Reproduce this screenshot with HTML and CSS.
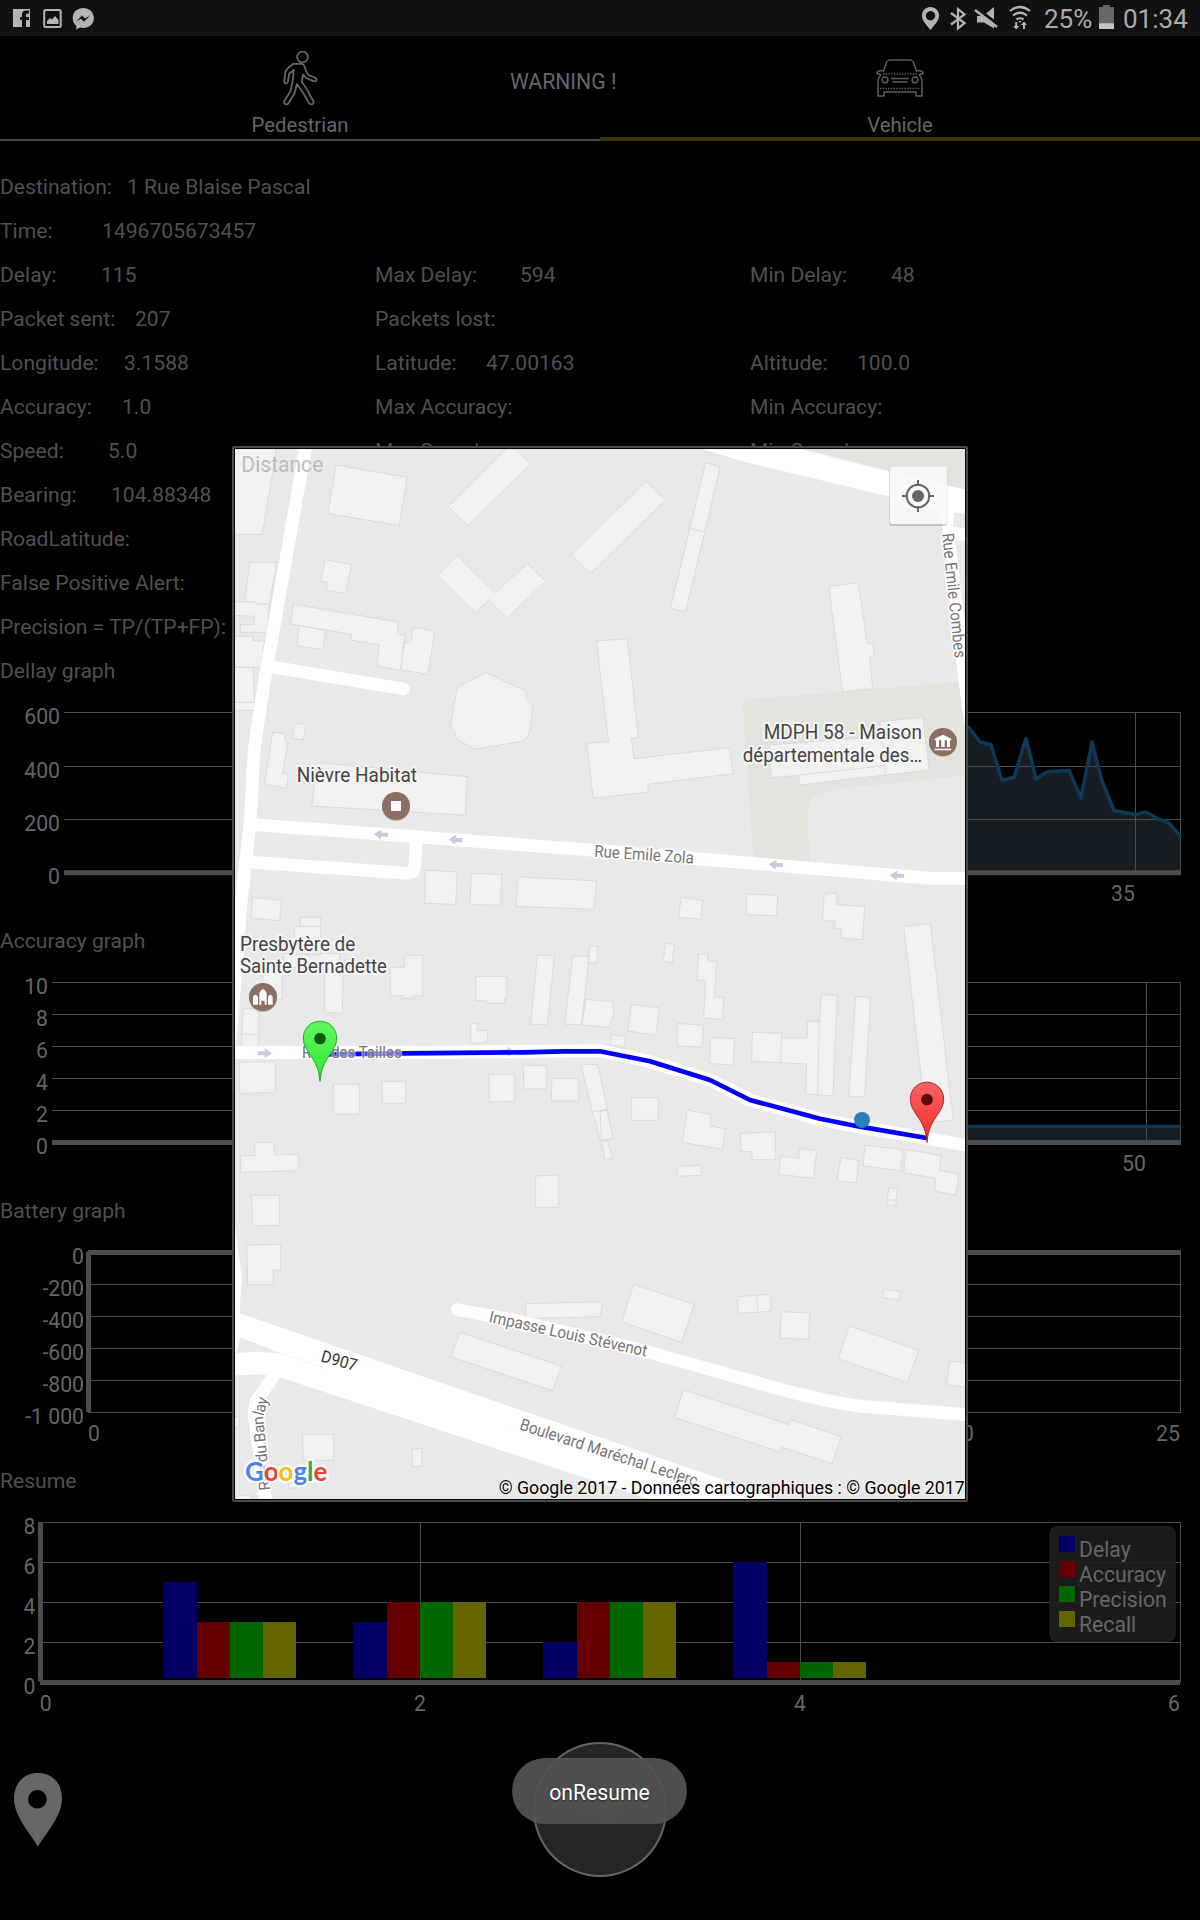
FILE: index.html
```html
<!DOCTYPE html>
<html lang="fr">
<head>
<meta charset="utf-8">
<title>Warning monitor</title>
<link rel="stylesheet" href="styles.css">
</head>
<body>
<div class="screen">
  <header class="status">
    <div class="status-left">
      <svg width="110" height="36" viewBox="0 0 110 36">
        <path fill="#b4b4b4" fill-rule="evenodd" d="M13 9h17v18h-4v-7h3v-3h-3v-2q0-1.500 1.500-1.500h1.500v-3h-3q-4 0-4 4v2.500h-2v3h2v7h-9z"/>
        <rect x="44.200" y="10" width="16.500" height="17" rx="1.500" fill="none" stroke="#b4b4b4" stroke-width="2"/>
        <path fill="#b4b4b4" d="M47 24v-3l3-3 2 1.500 3-3.500 3.500 4v4z"/>
        <path fill="#b4b4b4" d="M83.300 8c6 0 10.600 4.300 10.600 10s-4.600 10-10.600 10l-3.300-.5-3.700 2v-3.700C74 24 72.700 21.300 72.700 18c0-5.700 4.600-10 10.600-10z"/>
        <path fill="#111" d="M76 21.500l6-6 3 3 5-3-6 6.200-3-3z"/>
      </svg>
    </div>
    <div class="status-right">
      <svg width="120" height="36" viewBox="918 0 120 36">
        <path fill="#b4b4b4" fill-rule="evenodd" d="M930.500 7c5 0 8.600 3.700 8.600 8.500 0 5-4.600 9.500-8.600 14.500-4-5-8.600-9.500-8.600-14.500 0-4.800 3.600-8.500 8.600-8.500zm0 4a4.700 4.700 0 1 0 .01 0z"/>
        <path fill="none" stroke="#b4b4b4" stroke-width="2.200" d="M951 13l13.500 10-6.500 5.500v-19.500l6.500 5.500-13.500 10"/>
        <path fill="#b4b4b4" d="M977 16l6 0 11-9v21.500l-10-6h-7z"/>
        <path stroke="#111" stroke-width="3" d="M977 8.500l21 16"/>
        <path stroke="#b4b4b4" stroke-width="2.400" d="M975 10l22 17"/>
        <g fill="none" stroke="#b4b4b4" stroke-width="2.200"><path d="M1010 11q10-8 20 0"/><path d="M1013 15.500q7-5.500 14 0"/><path d="M1016.500 19.500q3.500-2.500 7 0"/></g>
        <path fill="#b4b4b4" d="M1015.200 22h2v4h2l-3 3.500-3-3.500h2zM1023 29v-4h-2l3-3.500 3 3.500h-2v4zM1018.500 21h3l-1.500 2z"/>
      </svg>
      <span class="pct">25%</span>
      <svg class="batt" width="15" height="36" viewBox="0 0 15 36"><path fill="#666" d="M0 7h4V5h7v2h4v22H0z"/><path fill="#c4c4c4" d="M0 23.300h15V29H0z"/></svg>
      <span class="clock">01:34</span>
    </div>
  </header>

  <nav class="tabs">
    <div class="tab">
      <svg width="48" height="70" viewBox="276 44 48 70" fill="none" stroke="#666" stroke-width="1.800" stroke-linejoin="round">
        <circle cx="302.500" cy="57" r="5.400"/>
        <path d="M297.500 63.800h4c2.500 0 3.500 3 4 5.500 .8 3 1.500 5 4 6.200l5.500 2.200c3 1.200 1.500 4.500-1.500 3.500l-7.500-3.200-3-3.500-1.200 7.500c3 4 6 8 7.500 12l4 7c1.500 3-2.500 4.500-4.500 2l-5.500-10-6.500-9c-1 4-1 7-3 10.500l-5.500 9c-2 2-5 0-4-2.500l6-9.500 2.500-11 1-10.500-4.500 3.500-1.500 8.500c-1 2.500-4 1.500-3.500-1l1.200-9.500c2-3.500 5.500-6 8-7.700z"/>
      </svg>
      <span>Pedestrian</span>
    </div>
    <div class="tab active">
      <svg width="60" height="70" viewBox="870 44 60 70" fill="none" stroke="#5c5c5c" stroke-width="1.500" stroke-linejoin="round">
        <path d="M883 72l4-10.500 2-1.500h22l2 1.500 4 10.500M883 71c-3-1-6 0-6 2.500l4 1.500M917 71c3-1 6 0 6 2.500l-4 1.500M881 74c-2 3-3 5-3 8v14h6v-4h32v4h6v-14c0-3-1-5-3-8"/>
        <circle cx="885" cy="80" r="2.900"/><circle cx="915" cy="80" r="2.900"/>
        <path d="M891 78.500h18M892.500 82h15"/>
        <path stroke-dasharray="1.500 1.200" d="M883 74h34M880 88.500h40"/>
      </svg>
      <span>Vehicle</span>
    </div>
    <span class="warning">WARNING !</span>
  </nav>

  <main>
    <section class="info">
      <div class="row"><div class="cell"><span class="l126">Destination:</span><span>1 Rue Blaise Pascal</span></div></div>
      <div class="row"><div class="cell"><span class="l101">Time:</span><span>1496705673457</span></div></div>
      <div class="row">
        <div class="cell"><span class="l100">Delay:</span><span>115</span></div>
        <div class="cell"><span class="l145">Max Delay:</span><span>594</span></div>
        <div class="cell"><span class="l140">Min Delay:</span><span>48</span></div>
      </div>
      <div class="row">
        <div class="cell"><span class="l134">Packet sent:</span><span>207</span></div>
        <div class="cell"><span>Packets lost:</span></div>
      </div>
      <div class="row">
        <div class="cell"><span class="l123">Longitude:</span><span>3.1588</span></div>
        <div class="cell"><span class="l110">Latitude:</span><span>47.00163</span></div>
        <div class="cell"><span class="l106">Altitude:</span><span>100.0</span></div>
      </div>
      <div class="row">
        <div class="cell"><span class="l121">Accuracy:</span><span>1.0</span></div>
        <div class="cell"><span>Max Accuracy:</span></div>
        <div class="cell"><span>Min Accuracy:</span></div>
      </div>
      <div class="row">
        <div class="cell"><span class="l108">Speed:</span><span>5.0</span></div>
        <div class="cell"><span>Max Speed:</span></div>
        <div class="cell"><span>Min Speed:</span></div>
      </div>
      <div class="row"><div class="cell"><span class="l110">Bearing:</span><span>104.88348</span></div></div>
      <div class="row"><div class="cell"><span>RoadLatitude:</span></div></div>
      <div class="row"><div class="cell"><span>False Positive Alert:</span></div></div>
      <div class="row"><div class="cell"><span>Precision = TP/(TP+FP):</span></div></div>
    </section>

    <h2>Dellay graph</h2>
    <svg class="chart" viewBox="0 693 1200 226">
      <path class="area" d="M960 720L970 729 980 742 991 744.500 1002 780 1014 777.500 1026 738.500 1036 779 1047 772 1069 770.500 1081 798 1092 742 1102 781 1114 810.500 1135 814.500 1146 812 1158 819 1169 823 1181 837V871H960z"/>
      <path class="grid" d="M64 712.500H1181M64 766.500H1181M64 819.500H1181M1135.500 712V871M1180.500 712V871"/>
      <path class="axis" d="M64 872.800H1181"/>
      <path class="line" d="M960 720L970 729 980 742 991 744.500 1002 780 1014 777.500 1026 738.500 1036 779 1047 772 1069 770.500 1081 798 1092 742 1102 781 1114 810.500 1135 814.500 1146 812 1158 819 1169 823 1181 837"/>
      <g class="ylab"><text x="60" y="724">600</text><text x="60" y="778">400</text><text x="60" y="831">200</text><text x="60" y="884">0</text></g>
      <g class="xlab"><text x="1123" y="901">35</text></g>
    </svg>

    <h2>Accuracy graph</h2>
    <svg class="chart" viewBox="0 963 1200 226">
      <path class="area" d="M900 1126.500H1181V1141H900z"/>
      <path class="grid" d="M52 982.500H1181M52 1014.500H1181M52 1046.500H1181M52 1078.500H1181M52 1110.500H1181M1146.500 982V1141M1180.500 982V1141"/>
      <path class="axis" d="M52 1142.500H1181"/>
      <path class="line" d="M900 1126.500H1181"/>
      <g class="ylab"><text x="48" y="994">10</text><text x="48" y="1026">8</text><text x="48" y="1058">6</text><text x="48" y="1090">4</text><text x="48" y="1122">2</text><text x="48" y="1154">0</text></g>
      <g class="xlab"><text x="1134" y="1171">50</text></g>
    </svg>

    <h2>Battery graph</h2>
    <svg class="chart" viewBox="0 1233 1200 226">
      <path class="grid" d="M91 1284.500H1181M91 1316.500H1181M91 1348.500H1181M91 1380.500H1181M88 1412.500H1181M1180.500 1252V1412"/>
      <path class="axis" d="M88 1252.500H1181M88.500 1251.500V1412"/>
      <g class="ylab"><text x="84" y="1264">0</text><text x="84" y="1296">-200</text><text x="84" y="1328">-400</text><text x="84" y="1360">-600</text><text x="84" y="1392">-800</text><text x="84" y="1424">-1 000</text></g>
      <g class="xlab"><text x="94" y="1440.500">0</text><text x="962" y="1440.500">20</text><text x="1168" y="1440.500">25</text></g>
    </svg>

    <h2>Resume</h2>
    <svg class="chart" viewBox="0 1503 1200 226">
      <path class="grid" d="M42 1522.500H1181M42 1562.500H1181M42 1602.500H1181M42 1642.500H1181M420.500 1522V1680M800.500 1522V1680M1180.500 1522V1682"/>
      <path class="axis" d="M40 1682.500H1180M40.400 1522V1681.500"/>
      <g fill="#006"><path d="M163 1582h34v96h-34zM353 1622h34v56h-34zM543 1642h34v36h-34zM733 1562h34v116h-34z"/></g>
      <g fill="#600"><path d="M197 1622h33v56h-33zM387 1602h33v76h-33zM577 1602h33v76h-33zM767 1662h33v16h-33z"/></g>
      <g fill="#060"><path d="M230 1622h33v56h-33zM420 1602h33v76h-33zM610 1602h33v76h-33zM800 1662h33v16h-33z"/></g>
      <g fill="#660"><path d="M263 1622h33v56h-33zM453 1602h33v76h-33zM643 1602h33v76h-33zM833 1662h33v16h-33z"/></g>
      <g class="ylab"><text x="35.500" y="1534">8</text><text x="35.500" y="1574">6</text><text x="35.500" y="1614">4</text><text x="35.500" y="1654">2</text><text x="35.500" y="1694">0</text></g>
      <g class="xlab"><text x="45.700" y="1711">0</text><text x="420" y="1711">2</text><text x="800" y="1711">4</text><text x="1174" y="1711">6</text></g>
      <rect x="1049" y="1526" width="127" height="116" rx="8" fill="#1e1e1e" fill-opacity=".9"/>
      <path fill="#006" d="M1059 1536h16v16h-16z"/><path fill="#600" d="M1059 1561h16v16h-16z"/><path fill="#060" d="M1059 1586h16v16h-16z"/><path fill="#660" d="M1059 1611h16v16h-16z"/>
      <g class="legend"><text x="1079" y="1557">Delay</text><text x="1079" y="1582">Accuracy</text><text x="1079" y="1607">Precision</text><text x="1079" y="1632">Recall</text></g>
    </svg>
  </main>

  <footer class="controls">
    <svg class="pin" width="48" height="74" viewBox="0 0 48 74"><path fill="#666" fill-rule="evenodd" d="M24 0C38 0 48 10 48 25.500 48 42 35 56 24 73.500 13 56 0 42 0 25.500 0 10 10 0 24 0zm-.6 17a9.300 9.300 0 1 0 .01 0z"/></svg>
    <div class="stop">Stop</div>
  </footer>

  <div class="dialog">
    <svg class="map" viewBox="235 449 730 1050">
      <defs>
        <path id="arrow" fill="#c8cae0" d="M0 0L22-15v9h21v12H22v9z"/>
        <linearGradient id="gg" x2="0" y2="1"><stop stop-color="#62f762"/><stop offset="1" stop-color="#2ee82e"/></linearGradient>
        <linearGradient id="rg" x2="0" y2="1"><stop stop-color="#fa6363"/><stop offset="1" stop-color="#ee2c2c"/></linearGradient>
        <path id="marker" d="M0 0C-5-75-50-85-50-131A50 50 0 0 1 50-131C50-85 5-75 0 0z"/>
      </defs>
      <path fill="#e9e9e9" d="M235 449h730v1050H235z"/>

      <!-- parks -->
      <g transform="translate(600 440) scale(.33333)" fill="#e2e4dd">
        <path d="M427 780L1078 726 1100 860V1007L700 1048 640 1072 621 1112 630 1265 460 1255z"/>
        <path d="M590 20H1100V150z"/>
      </g>

      <!-- buildings -->
      <g class="bld">
        <g transform="translate(230 440) scale(.33333)">
          <path d="M10 26H140L97 283H10zM318 75L532 112 508 257 293 220zM830 26H856L902 72 713 257 655 199zM682 346L796 459 892 370 946 424 832 535 776 481 736 518 623 406zM285 359L365 373 347 460 289 451 291 427 272 424zM60 367H140L118 493 80 492 79 487 44 485z"/>
          <path d="M10 485L80 487 80 493H118L113 577H31V554H72V529L10 526zM10 589H69V601L103 604 93 682H10zM10 682H69L74 787H10zM10 787H74V811H10z"/>
          <path d="M191 493L505 546 502 581 526 587 512 690 440 679 448 614 365 601V583L182 552zM207 557L287 571 278 629 200 617zM549 562L615 573 594 703 512 690 521 610 542 608z"/>
          <path d="M769 698L889 754 887 776Q912 793 908 810L898 877Q890 902 872 905L734 928 675 894V875L661 858 681 747Q683 742 720 722zM193 850L229 853 220 900 188 895zM128 877L166 881V906L173 909 158 1000 175 1005 169 1044 103 1034zM260 967L712 1010 706 1126 245 1098z"/>
          <path d="M1024 345L1248 124 1306 181 1082 400zM1099 603L1192 596 1226 892 1204 895 1212 956 1499 923 1510 1001 1254 1033V1057L1090 1075 1069 910 1136 905z"/>
        </g>
        <g transform="translate(600 440) scale(.33333)">
          <path d="M317 68L361 81 257 515 211 505zM270 266L315 275M686 439L775 428 802 610 820 612 823 652 809 654 818 746 728 756zM510 915L840 890V845L968 832 988 990 858 1005 598 1035 596 1006 513 1013zM846 892L857 1005M598 1005L853 977"/>
        </g>
        <g transform="translate(230 880) scale(.33333)">
          <path d="M67 52L155 61 149 122 63 114zM211 112H272V225H193V139H211zM211 139H272M160 220H329V262H340L337 400 284 398V262H157V358H98V275H160zM40 385H86V490L82 501 34 499zM34 463H82M524 226H578V348H551V355H517V347H481V262H524zM737 289H830V356H823V370H769V361H737zM585-30L682-24 677 73 584 70zM724-20L815-17 812 76 720 74zM864-10L1100 3 1091 88 857 79zM922 226H973L953 433H902zM1028 229H1077L1055 433H1004zM1080 196L1104 200 1100 250 1075 248zM1068 358L1148 365 1151 400 1139 443 1055 435z"/>
          <path d="M722 430H742V450L773 452 772 487 722 490zM28 547L136 545V638L28 640zM310 613H389V703H310zM455 604H527V670H458zM776 583H854V663L778 667zM880 556H950V627H881zM966 595H1046V663H964zM1052 552L1104 554 1150 775 1112 785 1086 690zM1086 696L1130 688M74 787H133V825L206 823V872L32 877V827H74zM64 946H149V1036L68 1038zM917 888L986 885V982H917z"/>
          <path d="M50 1095L152 1093V1170H130V1214H53zM886 1271L1118 1265 1110 1310 888 1316zM690 1357L994 1458 968 1532 662 1430zM217 1663H311V1741H220zM545 1707L576 1705V1759H547zM10 1610H28V1642H10zM175 1810H198V1824H176zM10 1850L62 1844 68 1870H10z"/>
        </g>
        <g transform="translate(600 880) scale(.33333)">
          <path d="M243 52L308 61 303 118 236 112zM440 42L533 46 530 107 440 104zM673 40H710V74L794 79 788 179 723 174V145H705V124L667 122zM911 140L991 130 1060 720 980 730zM197 190L223 194 217 249 190 244zM296 222H323V244H350L344 350 371 352 368 418 311 415 317 300 290 301zM95 373L180 384 167 466 83 453zM34 463L77 470 73 502 32 495zM232 430L310 436 307 502 230 497zM331 472L404 476 400 556 328 550zM457 457L545 460V474H622V424H658L664 343 712 347 699 648 617 642 620 552 455 544zM545 460L542 546M658 424L653 642M767 349L812 352 794 651 746 648z"/>
          <path d="M95 652L176 654 175 721H95zM0 695L21 690 40 775 5 782zM5 785L22 782 38 835 15 841zM262 690L333 704 331 738 376 746 368 808 246 787zM422 761L526 755V839H456V815H422zM542 829L597 835V806L650 811 641 895 536 883zM230 859L304 856V886L232 889zM723 832L777 842 768 909 711 901zM795 795L910 810 901 872 789 858zM918 808L1024 827 1018 871 1078 882 1067 946 1004 933 1008 895 911 878zM867 922L892 927 886 976 860 972z"/>
          <path d="M101 1213L283 1273 245 1387 65 1326zM412 1250L512 1243V1294L414 1300zM470 1247L473 1296M543 1295L629 1299 626 1378 541 1375zM851 1228L902 1235 899 1260 848 1253zM748 1337L956 1411 922 1508 714 1436zM1049 1442L1100 1450V1522L1040 1514zM250 1529L568 1634 571 1618 724 1670 697 1751 545 1702 540 1716 223 1612zM860 960H888V976H862z"/>
        </g>
      </g>

      <!-- roads -->
      <g class="road">
        <g transform="translate(230 440) scale(.33333)">
          <path d="M229 10L110 685Q75 900 72 940L60 1153 34 1380-2 1830M110 678L520 747M60 1153L1095 1231 1570 1270 2100 1315H2230M45 1265L535 1300Q553 1298 555 1275L559 1195"/>
        </g>
        <g transform="translate(600 440) scale(.33333)">
          <path class="solid" d="M290 22H580L870 95 1100 150V222L1062 217 1058 260 1100 267V303L1066 300 1100 600V900L1075 720 1022 210 870 170 435 66z"/>
        </g>
        <g transform="translate(230 880) scale(.33333)">
          <path d="M0 518L500 518 1110 512 1260 545 1440 600 1560 660 1770 718 1890 742 2090 775 2230 800M-5 1030L16 1190 8 1330"/>
        </g>
        <g transform="translate(230 1200) scale(.33333)">
          <path d="M682 329L850 360 1250 455 1670 573Q1850 618 1910 620L2220 645M130 530L78 605 72 640 107 900"/>
          <path class="solid" d="M10 337L28 340 1110 712 1655 900H1265L150 532 85 523 10 527z"/>
          <path class="gap" d="M32 413L155 461 85 455 18 459z"/>
          <path class="seam" d="M155 461L290 506"/>
        </g>
      </g>

      <g transform="translate(230 440) scale(.33333)">
        <use href="#arrow" transform="translate(431 1182) rotate(4)"/><use href="#arrow" transform="translate(655 1198) rotate(4)"/><use href="#arrow" transform="translate(1616 1273) rotate(4)"/><use href="#arrow" transform="translate(1979 1305) rotate(4)"/>
        <use href="#arrow" transform="translate(126 1840) rotate(180)"/><use href="#arrow" transform="translate(855 1835) rotate(180)"/>
      </g>

      <!-- route -->
      <path class="route" transform="translate(230 880) scale(.33333)" d="M270 523L520 520 880 517 1000 514H1110L1260 544 1440 600 1560 660 1770 716 1890 740 2090 774"/>

      <!-- street names -->
      <g class="street" transform="translate(600 440) scale(.33333)">
        <text transform="translate(-18 1250) rotate(4)" textLength="299" lengthAdjust="spacingAndGlyphs">Rue Emile Zola</text>
        <text transform="translate(1026 281) rotate(84.200)" textLength="376" lengthAdjust="spacingAndGlyphs">Rue Emile Combes</text>
      </g>
      <g class="street" transform="translate(230 880) scale(.33333)">
        <text class="faded" x="216" y="534" textLength="299" lengthAdjust="spacingAndGlyphs">Rue des Tailles</text>
      </g>
      <g class="street" transform="translate(230 1200) scale(.33333)">
        <text transform="translate(775 366) rotate(12.400)" textLength="484" lengthAdjust="spacingAndGlyphs">Impasse Louis Stévenot</text>
        <text transform="translate(866 688) rotate(17.900)" textLength="558" lengthAdjust="spacingAndGlyphs">Boulevard Maréchal Leclerc</text>
        <text transform="translate(270 484) rotate(15.500)" textLength="110" lengthAdjust="spacingAndGlyphs" fill="#333">D907</text>
        <path id="banlay" fill="none" d="M121 870L100 650 120 575"/>
        <text class="tight"><textPath href="#banlay">Rue du Banlay</textPath></text>
      </g>

      <!-- places -->
      <g transform="translate(230 440) scale(.33333)">
        <text class="dist" x="34" y="96" textLength="246" lengthAdjust="spacingAndGlyphs">Distance</text>
        <g class="poi"><text x="200" y="1027" textLength="361" lengthAdjust="spacingAndGlyphs">Nièvre Habitat</text>
        <text x="2076" y="896" text-anchor="end" textLength="475" lengthAdjust="spacingAndGlyphs">MDPH 58 - Maison</text>
        <text x="2076" y="965" text-anchor="end" textLength="538" lengthAdjust="spacingAndGlyphs">départementale des…</text>
        <text x="30" y="1532" textLength="346" lengthAdjust="spacingAndGlyphs">Presbytère de</text>
        <text x="30" y="1600" textLength="441" lengthAdjust="spacingAndGlyphs">Sainte Bernadette</text></g>
        <g fill="#bbb"><circle cx="498" cy="1101" r="42"/><circle cx="2139" cy="909" r="42"/><circle cx="99" cy="1674" r="42"/></g>
        <g fill="#8d6e63"><circle cx="498" cy="1098" r="42"/><circle cx="2139" cy="906" r="42"/><circle cx="99" cy="1671" r="42"/></g>
        <g fill="#fff"><path d="M483 1083h30v30h-30zM2114 896L2139 884 2164 896V901H2160V921H2151V901H2144V921H2134V901H2127V921H2118V901H2114zM2114 926H2164V931H2114z"/>
        <path d="M69 1694V1670Q76 1658 84 1670V1694zM88 1694V1660Q99 1636 110 1660V1694H104V1682H94V1694zM114 1694V1670Q121 1658 128 1670V1694z"/></g>
      </g>

      <circle cx="862" cy="1120" r="8" fill="#2980b9"/>
      <g transform="translate(320 1081.500) scale(.33333)"><use href="#marker" fill="url(#gg)" stroke="#26a626" stroke-width="3"/><circle cy="-129" r="17.500" fill="#0c5a0c"/></g>
      <g transform="translate(927 1142.500) scale(.33333)"><use href="#marker" fill="url(#rg)" stroke="#b02222" stroke-width="3"/><circle cy="-129" r="17.500" fill="#5a0c0c"/></g>

      <!-- my-location button -->
      <g transform="translate(600 440) scale(.33333)">
        <rect x="868" y="83" width="174" height="175" rx="8" fill="#000" fill-opacity=".16"/>
        <rect x="870" y="81" width="171" height="171" rx="6" fill="#fff" fill-opacity=".86"/>
        <circle cx="954" cy="168" r="34" fill="none" stroke="#666" stroke-width="6"/><circle cx="954" cy="168" r="18" fill="#666"/>
        <path stroke="#666" stroke-width="6" d="M954 120V137M954 199V216M906 168H923M985 168H1002"/>
      </g>

      <g transform="translate(230 1200) scale(.33333)">
        <text class="logo" x="45" y="844" textLength="247" lengthAdjust="spacingAndGlyphs"><tspan fill="#4285f4">G</tspan><tspan fill="#ea4335">o</tspan><tspan fill="#fbbc05">o</tspan><tspan fill="#4285f4">g</tspan><tspan fill="#34a853">l</tspan><tspan fill="#ea4335">e</tspan></text>
        <text class="copy" x="806" y="882" textLength="1398" lengthAdjust="spacingAndGlyphs">© Google 2017 - Données cartographiques : © Google 2017</text>
      </g>
    </svg>
  </div>
  <div class="toast">onResume</div>
</div>
</body>
</html>
```

FILE: styles.css
```css
body {
  margin: 0;
  background: #000;
  font-family: Roboto, "Liberation Sans", sans-serif;
  font-size: 21.100px;
  color: #505050;
}
.screen {
  position: relative;
  width: 1200px;
  height: 1920px;
  overflow: hidden;
  background: #000;
}
svg { display: block; }

.status {
  display: flex;
  justify-content: space-between;
  height: 36px;
  background: #111;
  color: #aaa;
}
.status-right {
  display: flex;
  font-size: 26px;
  line-height: 38px;
  padding-right: 13px;
}
.pct { width: 54px; margin-left: 6px; }
.pct, .clock { white-space: nowrap; }
.batt { margin: 0 9px 0 1px; }
.clock { width: 64px; }

.tabs {
  position: relative;
  display: flex;
  height: 105px;
  color: #666;
}
.tab {
  flex: 1;
  display: flex;
  flex-direction: column;
  align-items: center;
  padding-top: 8px;
  box-sizing: border-box;
  border-bottom: 2px solid #4c4c4c;
  font-size: 20.300px;
  line-height: 22px;
}
.tab svg { height: 70px; flex: none; }
.tab.active { border-bottom: 4px solid #403500; }
.warning {
  position: absolute;
  left: 510px;
  top: 33px;
  line-height: 26px;
  font-size: 21.200px;
}

.info { padding-top: 24px; }
.row {
  display: grid;
  grid-template-columns: repeat(3, 375px);
  height: 44px;
  line-height: 44px;
}
.cell { display: flex; white-space: nowrap; }
.l100 { width: 101px; }
.l101 { width: 102px; }
.l106 { width: 107px; }
.l108 { width: 108px; }
.l110 { width: 111px; }
.l121 { width: 122px; }
.l123 { width: 124px; }
.l126 { width: 127px; }
.l134 { width: 135px; }
.l140 { width: 141px; }
.l145 { width: 145px; }

h2 {
  margin: 0;
  height: 44px;
  line-height: 44px;
  font-size: inherit;
  font-weight: 400;
}
.chart { width: 1200px; height: 226px; }
.grid { fill: none; stroke: #4c4c4c; stroke-width: 1; }
.axis { fill: none; stroke: #4c4c4c; stroke-width: 5; }
.line { fill: none; stroke: #0c3a56; stroke-width: 3.500; stroke-linejoin: round; }
.area { fill: #151d23; }
.ylab, .xlab, .legend { fill: #666; font-size: 21.200px; }
.ylab { text-anchor: end; }
.xlab { text-anchor: middle; }

.controls {
  display: flex;
  align-items: flex-start;
  padding: 13px 0 0 13.500px;
}
.pin { margin-top: 31px; }
.stop {
  width: 130px;
  height: 131px;
  margin-left: 471.500px;
  border: 2px solid #666;
  border-radius: 50%;
  background: #252525;
  color: #8a1c1c;
  text-align: center;
  line-height: 136px;
}

.dialog {
  position: absolute;
  left: 232px;
  top: 446px;
  width: 730px;
  height: 1050px;
  padding: 1px;
  border: 2px solid #4c4c4c;
  border-radius: 2px;
  background: #000;
}
.map { width: 730px; height: 1050px; }
.bld path { fill: #f1f1f1; stroke: #dadada; stroke-width: 3; }
.road path { fill: none; stroke: #fff; stroke-width: 38; stroke-linecap: round; stroke-linejoin: round; }
.road .solid { fill: #fff; stroke: none; }
.road .gap { fill: #e9e9e9; stroke: none; }
.road .seam { stroke: #f0f0f0; stroke-width: 2; }
.route { fill: none; stroke: #00f; stroke-width: 14; stroke-linejoin: round; }
.street text { font-size: 50px; paint-order: stroke; stroke: #fff; stroke-width: 9; stroke-linejoin: round; }
.street { fill: #757575; }
.street .faded { stroke-opacity: .5; }
.street .tight { font-size: 47px; letter-spacing: -1.500px; }
.poi text { font-size: 61px; fill: #444; paint-order: stroke; stroke: #f5f5f5; stroke-width: 12; stroke-linejoin: round; }
.dist { font-size: 64px; fill: #bdbdbd; }
.logo { font-family: Lato, sans-serif; font-size: 80px; font-weight: 700; paint-order: stroke; stroke: #fff; stroke-opacity: .8; stroke-width: 14; stroke-linejoin: round; }
.copy { font-size: 54px; fill: #000; paint-order: stroke; stroke: #fff; stroke-opacity: .4; stroke-width: 6; }

.toast {
  position: absolute;
  left: 512px;
  top: 1758px;
  width: 175px;
  height: 66px;
  border-radius: 33px;
  background: rgba(83, 83, 83, .93);
  color: #fff;
  font-size: 21.200px;
  line-height: 69px;
  text-align: center;
  text-shadow: 0 1px 2px #222;
}
```
